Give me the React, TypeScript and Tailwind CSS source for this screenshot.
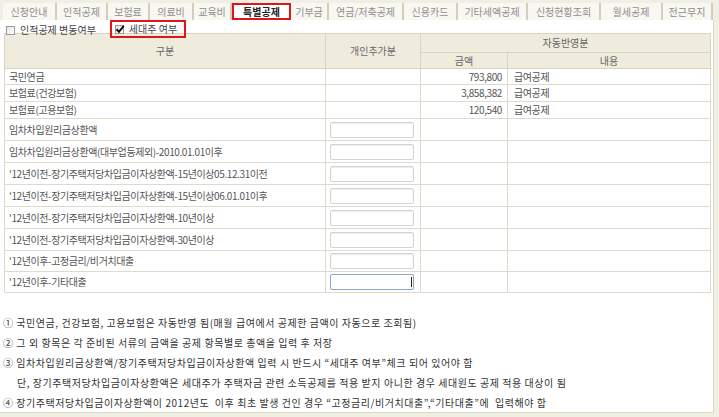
import React from "react";

const tabs = [
  { label: "신청안내", w: "w-[54px]" },
  { label: "인적공제", w: "w-[51px]" },
  { label: "보험료", w: "w-[42px]" },
  { label: "의료비", w: "w-[44px]" },
  { label: "교육비", w: "w-[38px]" },
  { label: "특별공제", w: "w-[59px]", active: true },
  { label: "기부금", w: "w-[38px]" },
  { label: "연금/저축공제", w: "w-[75px]" },
  { label: "신용카드", w: "w-[54px]" },
  { label: "기타세액공제", w: "w-[70px]" },
  { label: "신청현황조회", w: "w-[73px]" },
  { label: "월세공제", w: "w-[62px]" },
  { label: "전근무지", w: "w-[50px]" },
];

const autoRows = [
  { label: "국민연금", amount: "793,800", h: "h-[16px]" },
  { label: "보험료(건강보험)", amount: "3,858,382", h: "h-[17px]" },
  { label: "보험료(고용보험)", amount: "120,540", h: "h-[17px]" },
];

const inputRows = [
  { label: "임차차입원리금상환액", h: "h-[22px]" },
  { label: "임차차입원리금상환액(대부업등제외)-2010.01.01이후", h: "h-[22px]" },
  { label: "'12년이전-장기주택저당차입금이자상환액-15년이상05.12.31이전", h: "h-[22px]" },
  { label: "'12년이전-장기주택저당차입금이자상환액-15년이상06.01.01이후", h: "h-[22px]" },
  { label: "'12년이전-장기주택저당차입금이자상환액-10년이상", h: "h-[22px]" },
  { label: "'12년이전-장기주택저당차입금이자상환액-30년이상", h: "h-[22px]" },
  { label: "'12년이후-고정금리/비거치대출", h: "h-[21px]" },
  { label: "'12년이후-기타대출", h: "h-[21px]", focused: true },
];

const Checkbox = ({ checked }: { checked?: boolean }) => (
  <span className="relative inline-block w-[9px] h-[9px] border border-[#9a9a9a] bg-gradient-to-br from-[#e4e4e0] to-white">
    {checked && (
      <svg viewBox="0 0 10 10" className="absolute left-[-1px] top-[-2px] w-[10px] h-[10px]">
        <path d="M1.5 5.2 L4 7.8 L8.8 1.8" fill="none" stroke="#111" strokeWidth="2" />
      </svg>
    )}
  </span>
);

const App = () => {
  return (
    <div className="w-[719px] h-[417px] overflow-hidden bg-[#f1efe4] font-['Noto_Sans_CJK_KR',sans-serif] text-[10px] leading-none">
      {/* tab strip */}
      <div className="flex h-[20px] pl-[3px] pt-[3px]">
        {tabs.map((t) =>
          t.active ? (
            <div
              key={t.label}
              className={`${t.w} h-[17px] flex items-center justify-center border-2 border-[#e0141b] bg-white font-bold text-[#222]`}
            >
              {t.label}
            </div>
          ) : (
            <div
              key={t.label}
              className={`${t.w} h-[17px] flex items-center justify-center border-r-2 border-[#d3cebb] bg-[#f8f7f1] text-[#8e8e8e]`}
            >
              {t.label}
            </div>
          )
        )}
      </div>

      <div className="w-[714px] h-[393px] bg-white border-r border-b border-[#dcd8c6]">
        {/* option row */}
        <div className="flex h-[13px] items-start pl-[6px] text-[#444]">
          <div className="flex items-center gap-[5px] h-[18px] mt-[1px]">
            <Checkbox />
            <span>인적공제 변동여부</span>
          </div>
          <div className="relative z-10 ml-[14px] flex items-center gap-[5px] h-[18px] w-[76px] pl-[3px] border-2 border-[#e0141b]">
            <Checkbox checked />
            <span>세대주 여부</span>
          </div>
        </div>

        {/* table */}
        <table className="ml-[4px] w-[706px] table-fixed border-collapse text-[#555]">
          <colgroup>
            <col className="w-[321px]" />
            <col className="w-[95px]" />
            <col className="w-[87px]" />
            <col className="w-[203px]" />
          </colgroup>
          <thead className="bg-[#efecdd] text-[#666]">
            <tr className="h-[19px]">
              <th rowSpan={2} className="border border-[#d8d4c2] font-normal">구분</th>
              <th rowSpan={2} className="border border-[#d8d4c2] font-normal">개인추가분</th>
              <th colSpan={2} className="border border-[#d8d4c2] font-normal">자동반영분</th>
            </tr>
            <tr className="h-[16px]">
              <th className="border border-[#d8d4c2] font-normal">금액</th>
              <th className="border border-[#d8d4c2] font-normal">내용</th>
            </tr>
          </thead>
          <tbody className="tracking-[-0.4px]">
            {autoRows.map((r) => (
              <tr key={r.label} className={r.h}>
                <td className="border border-[#dedbcb] pl-[4px]">{r.label}</td>
                <td className="border border-[#dedbcb]"></td>
                <td className="border border-[#dedbcb] pr-[5px] text-right">{r.amount}</td>
                <td className="border border-[#dedbcb] pl-[6px]">급여공제</td>
              </tr>
            ))}
            {inputRows.map((r) => (
              <tr key={r.label} className={r.h}>
                <td className="border border-[#dedbcb] pl-[4px]">{r.label}</td>
                <td className="border border-[#dedbcb] pl-[4px]">
                  {r.focused ? (
                    <div className="relative w-[84px] h-[16px] rounded-[2px] border border-[#8fa6c4] bg-white">
                      <span className="absolute right-[1px] top-[2px] w-px h-[10px] bg-[#222]" />
                    </div>
                  ) : (
                    <div className="w-[84px] h-[16px] rounded-[2px] border border-[#d4d4d4] bg-white shadow-[inset_0_1px_1px_#ececec]" />
                  )}
                </td>
                <td className="border border-[#dedbcb]"></td>
                <td className="border border-[#dedbcb]"></td>
              </tr>
            ))}
          </tbody>
        </table>

        {/* notes */}
        <div className="pt-[20px] pl-[3px] text-[10px] leading-[20px] tracking-[0.55px] text-[#333]">
          <p>① 국민연금, 건강보험, 고용보험은 자동반영 됨(매월 급여에서 공제한 금액이 자동으로 조회됨)</p>
          <p>② 그 외 항목은 각 준비된 서류의 금액을 공제 항목별로 총액을 입력 후 저장</p>
          <p>③ 임차차입원리금상환액/장기주택저당차입금이자상환액 입력 시 반드시 “세대주 여부”체크 되어 있어야 함</p>
          <p className="pl-[14px]">단, 장기주택저당차입금이자상환액은 세대주가 주택자금 관련 소득공제를 적용 받지 아니한 경우 세대원도 공제 적용 대상이 됨</p>
          <p>④ 장기주택저당차입금이자상환액이 2012년도&nbsp; 이후 최초 발생 건인 경우 “고정금리/비거치대출”,“기타대출”에&nbsp; 입력해야 함</p>
        </div>
      </div>
    </div>
  );
};

export default App;
